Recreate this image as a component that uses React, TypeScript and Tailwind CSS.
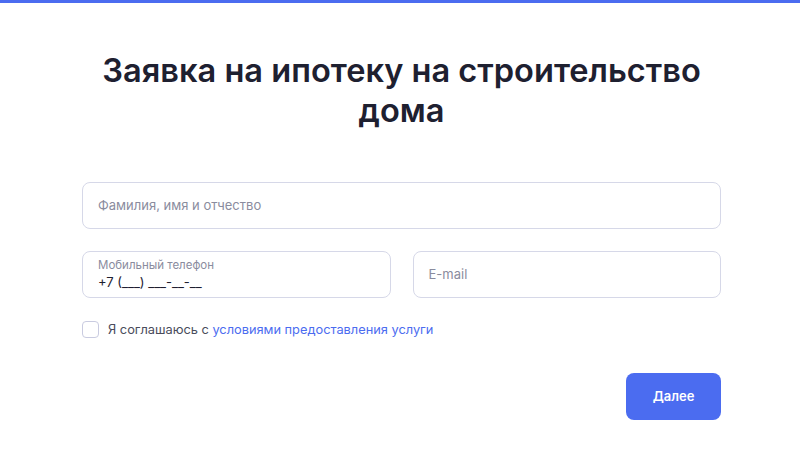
export default function App() {
  return (
    <div className="min-h-[465px] bg-white font-['Inter',sans-serif]">
      <div className="h-[3px] bg-[#4b6cf0]" />
      <div className="ml-[82px] w-[639px] pt-[47px]">
        <h1 className="text-center text-[32.6px] leading-[40px] font-semibold text-[#1e2030]">
          Заявка на ипотеку на строительство дома
        </h1>

        <div className="mt-[52px] flex flex-col gap-[22px]">
          <div className="h-[47px] rounded-[8px] border border-[#d6d8e8] flex items-center px-[15px]">
            <span className="text-[13px] text-[#8a8c9e]">Фамилия, имя и отчество</span>
          </div>

          <div className="grid grid-cols-2 gap-[22px]">
            <div className="h-[47px] rounded-[8px] border border-[#d6d8e8] flex flex-col justify-center px-[15px]">
              <span className="text-[11.5px] leading-[15px] text-[#8a8c9e]">Мобильный телефон</span>
              <span className="text-[13px] leading-[18px] text-[#1e2030]">+7 (___) ___-__-__</span>
            </div>
            <div className="h-[47px] rounded-[8px] border border-[#d6d8e8] flex items-center px-[15px]">
              <span className="text-[13px] text-[#8a8c9e]">E-mail</span>
            </div>
          </div>
        </div>

        <label className="mt-[22px] flex items-center gap-[9px]">
          <span className="w-[17px] h-[17px] rounded-[4px] border border-[#c9cbe0] bg-white" />
          <span className="text-[12.8px] text-[#4a4c5c]">
            Я соглашаюсь с <span className="text-[#4b6cf0]">условиями предоставления услуги</span>
          </span>
        </label>

        <div className="mt-[34px] flex justify-end">
          <button className="w-[95px] h-[47px] rounded-[8px] bg-[#4b6cf0] text-white text-[13px] font-semibold">
            Далее
          </button>
        </div>
      </div>
    </div>
  );
}
